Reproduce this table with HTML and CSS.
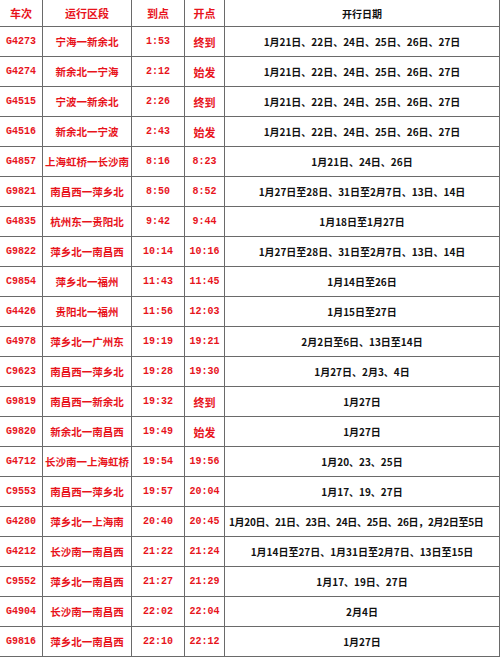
FILE: index.html
```html
<!DOCTYPE html>
<html lang="zh-CN">
<head>
<meta charset="utf-8">
<link rel="stylesheet" href="styles.css">
</head>
<body>
<div class="table">
  <div class="row head">
    <div class="c r">车次</div><div class="c r">运行区段</div><div class="c r">到点</div><div class="c r">开点</div><div class="c d">开行日期</div>
  </div>
  <div class="row"><div class="c r m">G4273</div><div class="c r s">宁海一新余北</div><div class="c r m">1:53</div><div class="c r">终到</div><div class="c d">1月21日、22日、24日、25日、26日、27日</div></div>
  <div class="row"><div class="c r m">G4274</div><div class="c r s">新余北一宁海</div><div class="c r m">2:12</div><div class="c r">始发</div><div class="c d">1月21日、22日、24日、25日、26日、27日</div></div>
  <div class="row"><div class="c r m">G4515</div><div class="c r s">宁波一新余北</div><div class="c r m">2:26</div><div class="c r">终到</div><div class="c d">1月21日、22日、24日、25日、26日、27日</div></div>
  <div class="row"><div class="c r m">G4516</div><div class="c r s">新余北一宁波</div><div class="c r m">2:43</div><div class="c r">始发</div><div class="c d">1月21日、22日、24日、25日、26日、27日</div></div>
  <div class="row"><div class="c r m">G4857</div><div class="c r s">上海虹桥一长沙南</div><div class="c r m">8:16</div><div class="c r m">8:23</div><div class="c d">1月21日、24日、26日</div></div>
  <div class="row"><div class="c r m">G9821</div><div class="c r s">南昌西一萍乡北</div><div class="c r m">8:50</div><div class="c r m">8:52</div><div class="c d">1月27日至28日、31日至2月7日、13日、14日</div></div>
  <div class="row"><div class="c r m">G4835</div><div class="c r s">杭州东一贵阳北</div><div class="c r m">9:42</div><div class="c r m">9:44</div><div class="c d">1月18日至1月27日</div></div>
  <div class="row"><div class="c r m">G9822</div><div class="c r s">萍乡北一南昌西</div><div class="c r m">10:14</div><div class="c r m">10:16</div><div class="c d">1月27日至28日、31日至2月7日、13日、14日</div></div>
  <div class="row"><div class="c r m">C9854</div><div class="c r s">萍乡北一福州</div><div class="c r m">11:43</div><div class="c r m">11:45</div><div class="c d">1月14日至26日</div></div>
  <div class="row"><div class="c r m">G4426</div><div class="c r s">贵阳北一福州</div><div class="c r m">11:56</div><div class="c r m">12:03</div><div class="c d">1月15日至27日</div></div>
  <div class="row"><div class="c r m">G4978</div><div class="c r s">萍乡北一广州东</div><div class="c r m">19:19</div><div class="c r m">19:21</div><div class="c d">2月2日至6日、13日至14日</div></div>
  <div class="row"><div class="c r m">C9623</div><div class="c r s">南昌西一萍乡北</div><div class="c r m">19:28</div><div class="c r m">19:30</div><div class="c d">1月27日、2月3、4日</div></div>
  <div class="row"><div class="c r m">G9819</div><div class="c r s">南昌西一新余北</div><div class="c r m">19:32</div><div class="c r">终到</div><div class="c d">1月27日</div></div>
  <div class="row"><div class="c r m">G9820</div><div class="c r s">新余北一南昌西</div><div class="c r m">19:49</div><div class="c r">始发</div><div class="c d">1月27日</div></div>
  <div class="row"><div class="c r m">G4712</div><div class="c r s">长沙南一上海虹桥</div><div class="c r m">19:54</div><div class="c r m">19:56</div><div class="c d">1月20、23、25日</div></div>
  <div class="row"><div class="c r m">C9553</div><div class="c r s">南昌西一萍乡北</div><div class="c r m">19:57</div><div class="c r m">20:04</div><div class="c d">1月17、19、27日</div></div>
  <div class="row"><div class="c r m">G4280</div><div class="c r s">萍乡北一上海南</div><div class="c r m">20:40</div><div class="c r m">20:45</div><div class="c d tight">1月20日、21日、23日、24日、25日、26日，2月2日至5日</div></div>
  <div class="row"><div class="c r m">G4212</div><div class="c r s">长沙南一南昌西</div><div class="c r m">21:22</div><div class="c r m">21:24</div><div class="c d">1月14日至27日、1月31日至2月7日、13日至15日</div></div>
  <div class="row"><div class="c r m">C9552</div><div class="c r s">萍乡北一南昌西</div><div class="c r m">21:27</div><div class="c r m">21:29</div><div class="c d">1月17、19日、27日</div></div>
  <div class="row"><div class="c r m">G4904</div><div class="c r s">长沙南一南昌西</div><div class="c r m">22:02</div><div class="c r m">22:04</div><div class="c d">2月4日</div></div>
  <div class="row"><div class="c r m">G9816</div><div class="c r s">萍乡北一南昌西</div><div class="c r m">22:10</div><div class="c r m">22:12</div><div class="c d">1月27日</div></div>
</div>
</body>
</html>
```

FILE: styles.css
```css
html, body {
  margin: 0;
  padding: 0;
  background: #ffffff;
}
.table {
  width: 500px;
  font-family: "Noto Sans CJK SC", "Noto Sans", sans-serif;
  font-weight: 700;
  font-size: 11px;
}
.row {
  display: grid;
  grid-template-columns: 43px 89px 53px 40px 275px;
  height: 30px;
  box-sizing: border-box;
  border-bottom: 1px solid #6a6a6a;
}
.row.head {
  height: 27px;
}
.c {
  box-sizing: border-box;
  border-right: 1px solid #6a6a6a;
  display: flex;
  align-items: center;
  justify-content: center;
  white-space: nowrap;
  overflow: hidden;
}
.r {
  color: #e8141c;
}
.d {
  color: #111111;
  font-size: 10px;
}
.s {
  font-size: 10.5px;
}
.m {
  font-family: "Liberation Mono", "DejaVu Sans Mono", monospace;
  font-size: 10px;
}
.tight {
  letter-spacing: -0.3px;
  justify-content: flex-start;
  padding-left: 4px;
}
```
